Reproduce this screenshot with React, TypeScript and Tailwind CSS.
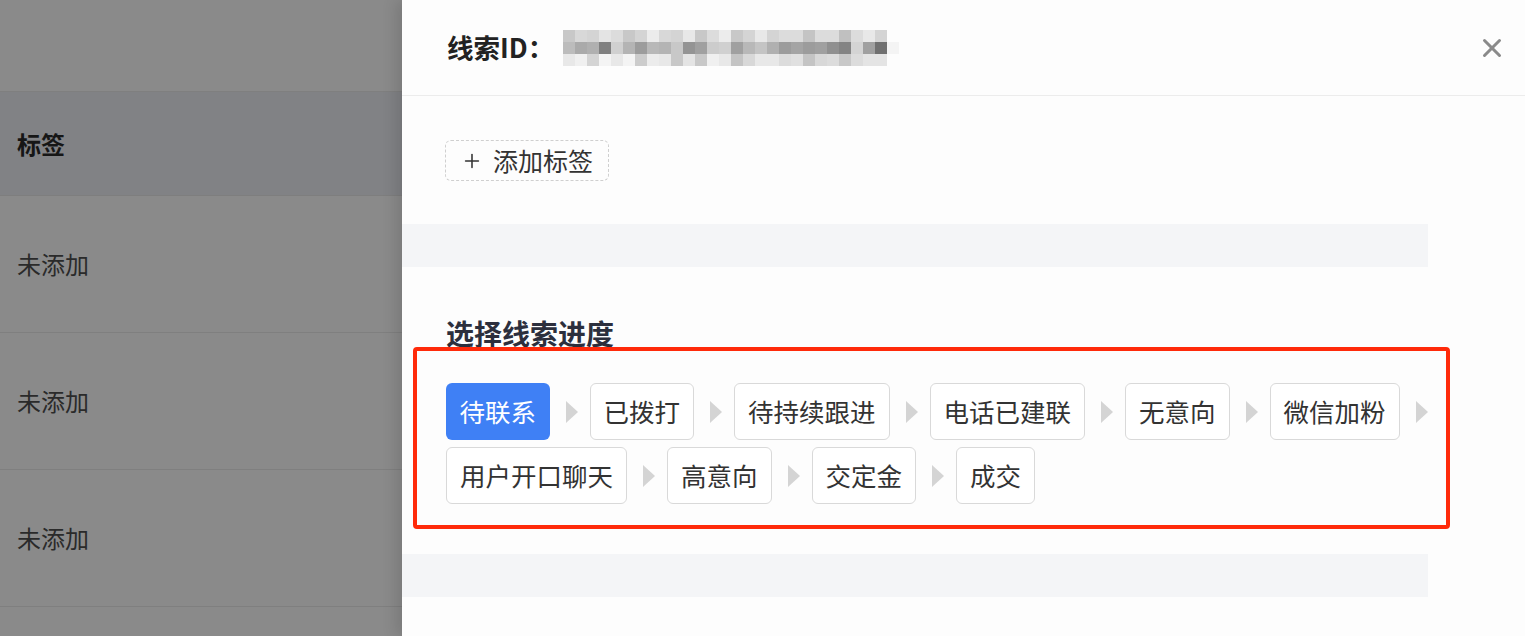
import { X, Plus } from 'lucide-react'

const FONT = { fontFamily: '"Noto Sans CJK SC", "Noto Sans", sans-serif' }

const STAGES = ['待联系', '已拨打', '待持续跟进', '电话已建联', '无意向', '微信加粉', '用户开口聊天', '高意向', '交定金', '成交']

// mosaic that hides the lead id
const MOSAIC = [
  ['c8', 'd8', 'd4', 'e4', 'dc', 'c8', 'd4', 'ec', 'd8', 'd4', 'e8', 'c8', 'dc', 'ec', 'c8', 'd4', 'e8', 'd4', 'dc', 'dc', 'c4', 'dc', 'dc', 'c0', 'dc', 'e8', 'd4', 'fd'],
  ['bc', 'aa', 'b0', '80', 'd0', 'b4', '9c', 'b8', 'b4', 'c8', '94', 'a0', 'cc', 'd0', 'a0', 'b8', 'c4', 'b0', '9c', 'a4', '9c', 'a0', '90', '84', 'd4', 'a0', '70', 'f4'],
  ['e8', 'f0', 'd4', 'f4', 'e8', 'f4', 'cc', 'ec', 'e8', 'c8', 'e4', 'c8', 'f0', 'e8', 'c4', 'd8', 'e8', 'e8', 'dc', 'e0', 'c4', 'd8', 'dc', 'c8', 'dc', 'e4', 'e4', 'fd'],
]

function Mosaic() {
  return (
    <div className="flex flex-col">
      {MOSAIC.map((row, r) => (
        <div key={r} className="flex">
          {row.map((c, i) => (
            <div key={i} className="w-[12px] h-[12px]" style={{ backgroundColor: `#${c}${c}${c}` }} />
          ))}
        </div>
      ))}
    </div>
  )
}

function Arrow() {
  return (
    <svg width="14" height="22" viewBox="0 0 14 22" className="ml-[15px] mr-[11px] shrink-0">
      <path d="M1 0 L13 11 L1 22 Z" fill="#d4d4d4" />
    </svg>
  )
}

export default function App() {
  return (
    <div className="flex h-[636px] w-[1525px] overflow-hidden bg-white" style={FONT}>

      {/* Table behind the mask */}
      <div className="w-[402px] shrink-0 bg-[#8a8a8a] flex flex-col">
        <div className="h-[92px] border-b border-[#7f7f7f]" />
        <div className="h-[104px] bg-[#818285] border-b border-[#7e7e7e] flex items-center pl-[17px]">
          <span className="text-[24px] font-bold text-[#161616]">标签</span>
        </div>
        {[0, 1, 2].map(i => (
          <div key={i} className="h-[137px] border-b border-[#7f7f7f] flex items-center pl-[17px]">
            <span className="text-[24px] text-[#2a2a2a]">未添加</span>
          </div>
        ))}
        <div className="flex-1" />
      </div>

      {/* Drawer */}
      <div className="relative z-10 flex-1 bg-[#fdfdfd] shadow-[-6px_0_14px_rgba(0,0,0,0.12)]">

        {/* Header */}
        <div className="h-[96px] border-b border-[#ececec] flex items-center justify-between pl-[45px] pr-[18px]">
          <div className="flex items-center">
            <span className="text-[26.5px] font-bold text-[#222] leading-none">线索ID：</span>
            <div className="ml-[9px]">
              <Mosaic />
            </div>
          </div>
          <X size={30} strokeWidth={2.4} className="text-[#8a8a8a]" />
        </div>

        <div className="w-[1026px]">
          <div className="pl-[43px] pt-[44px]">
            <button className="h-[41px] w-[164px] flex items-center gap-[10px] pl-[15px] border border-dashed border-[#cfcfcf] rounded-[6px] text-[25px] text-[#333]">
              <Plus size={22} strokeWidth={1.7} />
              <span>添加标签</span>
            </button>
          </div>

          <div className="mt-[43px] h-[43px] bg-[#f4f5f7]" />

          <div className="pl-[44px]">
            <h2 className="mt-[47px] text-[28px] leading-[38px] font-bold text-[#2c2f3d]">选择线索进度</h2>

            <div className="mt-[31px] w-[1010px] flex flex-wrap gap-y-[7px]">
              {STAGES.map((s, i) => (
                <div key={s} className="flex items-center">
                  <div className={
                    i === 0
                      ? 'h-[57px] px-[13.5px] flex items-center rounded-[6px] bg-[#3f80f5] text-white text-[25.5px]'
                      : 'h-[57px] px-[13px] flex items-center rounded-[6px] border-[1.5px] border-[#d9d9d9] bg-white text-[#333] text-[25.5px]'
                  }>
                    {s}
                  </div>
                  {i < STAGES.length - 1 && <Arrow />}
                </div>
              ))}
            </div>
          </div>

          <div className="mt-[50px] h-[43px] bg-[#f4f5f7]" />
        </div>

        {/* Annotation box */}
        <div className="absolute left-[11px] top-[347px] w-[1037px] h-[182px] border-4 border-[#ff2a0a] rounded-[4px] pointer-events-none" />
      </div>
    </div>
  )
}
